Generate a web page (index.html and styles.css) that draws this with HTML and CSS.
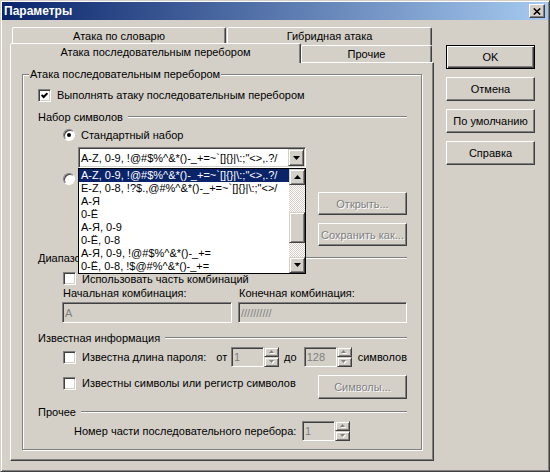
FILE: index.html
```html
<!DOCTYPE html>
<html>
  <head>
    <meta charset="utf-8">
    <title>Параметры</title>

    <link rel="stylesheet" href="styles.css">
  </head>
  <body>
    <div class="window">
      <div class="titlebar">
        <span class="title">Параметры</span>
        <span class="close">
          <svg width="8" height="7" viewBox="0 0 8 7"><path d="M0.8 0.5l6.4 6M7.2 0.5l-6.4 6" stroke="#000" stroke-width="1.6"/></svg>
        </span>
      </div>

      <div class="content">
        <div class="tabs">
          <div class="tab-row back">
            <div class="tab dict">Атака по словарю</div>
            <div class="tab hybrid">Гибридная атака</div>
          </div>
          <div class="tab-row front">
            <div class="tab active">Атака последовательным перебором</div>
            <div class="tab misc">Прочие</div>
          </div>

          <div class="panel">
            <div class="group">
              <div class="group-title">Атака последовательным перебором</div>

              <label class="row enable">
                <span class="check"><svg width="7" height="7" viewBox="0 0 7 7"><polyline points="0.6,3 2.6,5 6.4,1.2" fill="none" stroke="#000" stroke-width="2"/></svg></span>
                Выполнять атаку последовательным перебором
              </label>

              <div class="section charset-head">Набор символов</div>

              <label class="row option std">
                <span class="radio on"></span>
                Стандартный набор
              </label>

              <div class="combo">
                <span class="combo-text">A-Z, 0-9, !@#$%^&amp;*()-_+=~`[]{}|\:;&quot;&lt;&gt;,.?/</span>
                <span class="drop"><svg width="7" height="4" viewBox="0 0 7 4"><path d="M0 0h7L3.5 4z"/></svg></span>

                <!-- open drop-down of the combo -->
                <div class="list">
                  <div class="items">
                    <div class="item selected">A-Z, 0-9, !@#$%^&amp;*()-_+=~`[]{}|\:;&quot;&lt;&gt;,.?/</div>
                    <div class="item">E-Z, 0-8, !?$.,@#%^&amp;*()-_+=~`[]{}|\:;&quot;&lt;&gt;/</div>
                    <div class="item">A-Я</div>
                    <div class="item">0-Ё</div>
                    <div class="item">A-Я, 0-9</div>
                    <div class="item">0-Ё, 0-8</div>
                    <div class="item">A-Я, 0-9, !@#$%^&amp;*()-_+=</div>
                    <div class="item">0-Ё, 0-8, !$@#%^&amp;*()-_+=</div>
                  </div>
                  <div class="scrollbar">
                    <span class="arrow"><svg width="7" height="4" viewBox="0 0 7 4"><path d="M3.5 0L7 4H0z"/></svg></span>
                    <div class="track"><span class="thumb"></span></div>
                    <span class="arrow"><svg width="7" height="4" viewBox="0 0 7 4"><path d="M0 0h7L3.5 4z"/></svg></span>
                  </div>
                </div>
              </div>

              <label class="row option custom">
                <span class="radio"></span>
              </label>

              <div class="file-row">
                <input class="field custom-set" type="text" value="" disabled>
                <button class="btn small" disabled>Открыть...</button>
              </div>
              <div class="save-row">
                <button class="btn small" disabled>Сохранить как...</button>
              </div>

              <div class="section range-head">Диапазон</div>

              <label class="row option part">
                <span class="check"></span>
                Использовать часть комбинаций
              </label>
              <div class="range-labels">
                <span>Начальная комбинация:</span>
                <span>Конечная комбинация:</span>
              </div>
              <div class="range-fields">
                <input class="field" type="text" value="A" disabled>
                <input class="field" type="text" value="//////////" disabled>
              </div>

              <div class="section known-head">Известная информация</div>

              <div class="len-row">
                <label class="option len-check">
                  <span class="check"></span>
                  Известна длина пароля:
                </label>
                <span class="from">от</span>
                <div class="spin">
                  <input class="field" type="text" value="1" disabled>
                  <div class="spin-btns">
                    <span><svg width="6" height="4" viewBox="0 0 6 4"><path d="M3.5 1L6 4H1z" fill="#fff"/><path d="M2.5 0L5 3H0z" fill="#808080"/></svg></span>
                    <span><svg width="6" height="4" viewBox="0 0 6 4"><path d="M1 1h5L3.5 4z" fill="#fff"/><path d="M0 0h5L2.5 3z" fill="#808080"/></svg></span>
                  </div>
                </div>
                <span class="to">до</span>
                <div class="spin">
                  <input class="field" type="text" value="128" disabled>
                  <div class="spin-btns">
                    <span><svg width="6" height="4" viewBox="0 0 6 4"><path d="M3.5 1L6 4H1z" fill="#fff"/><path d="M2.5 0L5 3H0z" fill="#808080"/></svg></span>
                    <span><svg width="6" height="4" viewBox="0 0 6 4"><path d="M1 1h5L3.5 4z" fill="#fff"/><path d="M0 0h5L2.5 3z" fill="#808080"/></svg></span>
                  </div>
                </div>
                <span class="unit">символов</span>
              </div>

              <div class="chars-row">
                <label class="option chars-check">
                  <span class="check"></span>
                  Известны символы или регистр символов
                </label>
                <button class="btn small" disabled>Символы...</button>
              </div>

              <div class="section misc-head">Прочее</div>

              <div class="part-row">
                <span class="part-label">Номер части последовательного перебора:</span>
                <div class="spin">
                  <input class="field" type="text" value="1" disabled>
                  <div class="spin-btns">
                    <span><svg width="6" height="4" viewBox="0 0 6 4"><path d="M3.5 1L6 4H1z" fill="#fff"/><path d="M2.5 0L5 3H0z" fill="#808080"/></svg></span>
                    <span><svg width="6" height="4" viewBox="0 0 6 4"><path d="M1 1h5L3.5 4z" fill="#fff"/><path d="M0 0h5L2.5 3z" fill="#808080"/></svg></span>
                  </div>
                </div>
              </div>
            </div>
          </div>
        </div>

        <div class="side">
          <button class="btn default">OK</button>
          <button class="btn">Отмена</button>
          <button class="btn">По умолчанию</button>
          <button class="btn">Справка</button>
        </div>
      </div>
    </div>
  </body>
</html>
```

FILE: styles.css
```css
body {
  margin: 0;
  font-family: "Liberation Sans", Arial, sans-serif;
  font-size: 11px;
  color: #000;
  background: #d4d0c8;
}

.window {
  box-sizing: border-box;
  width: 550px;
  height: 472px;
  padding: 1px;
  border: 1px solid;
  border-color: #d4d0c8 #404040 #404040 #d4d0c8;
  box-shadow: inset 1px 1px #fff, inset -1px -1px #808080;
  background: #d4d0c8;
}

/* title bar */
.titlebar {
  display: flex;
  align-items: center;
  justify-content: space-between;
  height: 18px;
  padding: 0 3px 0 2px;
  background: linear-gradient(to right, #0a246a, #a6caf0);
}

.title {
  color: #fff;
  font-weight: bold;
  font-size: 12px;
}

.close {
  box-sizing: border-box;
  width: 16px;
  height: 14px;
  display: flex;
  align-items: center;
  justify-content: center;
  background: #d4d0c8;
  border: 1px solid;
  border-color: #fff #404040 #404040 #fff;
  box-shadow: inset -1px -1px #808080;
}

.content {
  display: flex;
  gap: 12px;
  padding: 7px 0 0 8px;
}

/* tab control */
.tabs {
  width: 424px;
  display: flex;
  flex-direction: column;
}

.tab-row {
  display: flex;
  align-items: flex-start;
  height: 18px;
}

.tab-row.back {
  padding-left: 2px;
  gap: 1px;
}

.tab-row.front {
  height: 17px;
}

.tab {
  box-sizing: border-box;
  height: 18px;
  border: 1px solid;
  border-bottom: none;
  border-color: #fff #404040 transparent #fff;
  border-radius: 2px 2px 0 0;
  box-shadow: inset -1px 0 #808080;
  background: #d4d0c8;
  text-align: center;
  line-height: 16px;
}

.dict {
  width: 214px;
}

.hybrid {
  width: 205px;
}

.misc {
  width: 131px;
  height: 17px;
}

.tab.active {
  position: relative;
  z-index: 1;
  width: 291px;
  height: 20px;
  margin-top: -2px;
  line-height: 17px;
}

.panel {
  box-sizing: border-box;
  height: 399px;
  padding: 11px 0 0 11px;
  border: 1px solid;
  border-color: #fff #404040 #404040 #fff;
  box-shadow: inset -1px -1px #808080;
}

/* etched frame */
.group {
  box-sizing: border-box;
  width: 400px;
  height: 376px;
  padding: 0 14px 0 15px;
  border: 1px solid #808080;
  box-shadow: inset 1px 1px #fff, 1px 1px #fff;
}

.group-title {
  width: fit-content;
  margin: -8px 0 0 -9px;
  padding: 0 1px;
  line-height: 14px;
  background: #d4d0c8;
}

.section {
  display: flex;
  align-items: center;
  height: 14px;
  line-height: 14px;
}

.section::after {
  content: "";
  flex: 1;
  height: 0;
  margin: -2px 0 0 5px;
  border-top: 1px solid #808080;
  box-shadow: 0 1px #fff;
}

.row {
  display: flex;
  align-items: center;
}

.option {
  display: flex;
  align-items: center;
  gap: 6px;
}

/* common controls */
.check {
  box-sizing: border-box;
  flex: none;
  width: 13px;
  height: 13px;
  display: flex;
  align-items: center;
  justify-content: center;
  background: #fff;
  border: 1px solid;
  border-color: #808080 #fff #fff #808080;
  box-shadow: inset 1px 1px #404040, inset -1px -1px #d4d0c8;
}

.radio {
  box-sizing: border-box;
  position: relative;
  flex: none;
  width: 12px;
  height: 12px;
  border-radius: 50%;
  background: #fff;
  border: 1px solid;
  border-color: #808080 #fff #fff #808080;
  box-shadow: inset 1px 1px #404040;
}

.radio.on::after {
  content: "";
  position: absolute;
  left: 3px;
  top: 3px;
  width: 4px;
  height: 4px;
  border-radius: 50%;
  background: #000;
}

.btn {
  box-sizing: border-box;
  width: 89px;
  height: 24px;
  padding: 0;
  font: inherit;
  color: #000;
  background: #d4d0c8;
  border: 1px solid;
  border-color: #fff #404040 #404040 #fff;
  box-shadow: inset -1px -1px #808080;
}

.btn.default {
  border-color: #000;
  box-shadow: inset 1px 1px #fff, inset -1px -1px #404040, inset -2px -2px #808080;
}

.btn.small {
  height: 23px;
}

.btn:disabled {
  color: #808080;
  text-shadow: 1px 1px #fff;
}

.field {
  box-sizing: border-box;
  height: 21px;
  margin: 0;
  padding: 0 0 0 2px;
  font: inherit;
  color: #808080;
  background: #d4d0c8;
  border: 1px solid;
  border-color: #808080 #fff #fff #808080;
  box-shadow: inset 1px 1px #404040, inset -1px -1px #d4d0c8;
  outline: none;
}

/* rows of the frame, top to bottom */
.enable {
  height: 16px;
  margin-top: 6px;
  gap: 6px;
}

.charset-head {
  margin-top: 7px;
}

.std {
  height: 16px;
  margin: 3px 0 0 25px;
}

.combo {
  box-sizing: border-box;
  position: relative;
  width: 228px;
  height: 21px;
  margin: 4px 0 0 40px;
  display: flex;
  align-items: center;
  background: #fff;
  border: 1px solid;
  border-color: #808080 #fff #fff #808080;
  box-shadow: inset 1px 1px #404040, inset -1px -1px #d4d0c8;
}

.combo-text {
  flex: 1;
  padding-left: 2px;
  white-space: nowrap;
  overflow: hidden;
}

.drop {
  box-sizing: border-box;
  width: 16px;
  height: 17px;
  margin-right: 1px;
  display: flex;
  align-items: center;
  justify-content: center;
  background: #d4d0c8;
  border: 1px solid;
  border-color: #d4d0c8 #404040 #404040 #d4d0c8;
  box-shadow: inset 1px 1px #fff, inset -1px -1px #808080;
}

.list {
  box-sizing: border-box;
  position: absolute;
  z-index: 2;
  top: 20px;
  left: -1px;
  width: 228px;
  height: 106px;
  display: flex;
  background: #fff;
  border: 1px solid #000;
}

.items {
  flex: 1;
  min-width: 0;
}

.item {
  height: 13px;
  line-height: 13px;
  padding-left: 2px;
  white-space: nowrap;
  overflow: hidden;
}

.item.selected {
  background: #0a246a;
  color: #fff;
}

.scrollbar {
  width: 16px;
  display: flex;
  flex-direction: column;
}

.arrow {
  box-sizing: border-box;
  height: 16px;
  display: flex;
  align-items: center;
  justify-content: center;
  background: #d4d0c8;
  border: 1px solid;
  border-color: #d4d0c8 #404040 #404040 #d4d0c8;
  box-shadow: inset 1px 1px #fff, inset -1px -1px #808080;
}

.track {
  flex: 1;
  background: repeating-conic-gradient(#fff 0 25%, #d4d0c8 0 50%) 0 0 / 2px 2px;
}

.thumb {
  box-sizing: border-box;
  display: block;
  height: 31px;
  margin-top: 27px;
  background: #d4d0c8;
  border: 1px solid;
  border-color: #d4d0c8 #404040 #404040 #d4d0c8;
  box-shadow: inset 1px 1px #fff, inset -1px -1px #808080;
}

.custom {
  height: 16px;
  margin: 3px 0 0 25px;
}

.file-row {
  display: flex;
  justify-content: space-between;
  margin: 5px 0 0 40px;
}

.custom-set {
  width: 228px;
  height: 23px;
}

.save-row {
  display: flex;
  justify-content: flex-end;
  margin-top: 8px;
}

.range-head {
  margin-top: 5px;
}

.part {
  height: 15px;
  margin: 6px 0 0 25px;
}

.range-labels,
.range-fields {
  display: grid;
  grid-template-columns: 170px 169px;
  gap: 6px;
  margin-left: 24px;
}

.range-labels {
  height: 14px;
  line-height: 14px;
}

.range-labels span {
  padding-left: 1px;
}

.range-fields {
  margin-top: 2px;
}

.range-fields .field {
  width: 100%;
}

.known-head {
  margin-top: 8px;
}

.len-row {
  display: flex;
  align-items: center;
  height: 20px;
  margin: 2px 0 0 25px;
}

.len-check {
  width: 156px;
}

.from {
  width: 15px;
}

.to {
  margin-left: 5px;
  width: 20px;
}

.unit {
  margin-left: 6px;
}

.spin {
  display: flex;
}

.spin .field {
  width: 33px;
  height: 20px;
}

.spin-btns {
  width: 15px;
  display: flex;
  flex-direction: column;
}

.spin-btns span {
  box-sizing: border-box;
  height: 10px;
  display: flex;
  align-items: center;
  justify-content: center;
  background: #d4d0c8;
  border: 1px solid;
  border-color: #d4d0c8 #404040 #404040 #d4d0c8;
  box-shadow: inset 1px 1px #fff, inset -1px -1px #808080;
}

.chars-row {
  display: flex;
  justify-content: space-between;
  align-items: flex-start;
  height: 24px;
  margin: 8px 0 0 25px;
}

.chars-check {
  height: 16px;
}

.chars-row .btn {
  height: 24px;
}

.misc-head {
  margin-top: 6px;
}

.part-row {
  display: flex;
  align-items: center;
  height: 20px;
  margin: 2px 0 0 36px;
}

.part-label {
  width: 228px;
}

/* dialog buttons */
.side {
  display: flex;
  flex-direction: column;
  gap: 8px;
  margin-top: 18px;
}
```
